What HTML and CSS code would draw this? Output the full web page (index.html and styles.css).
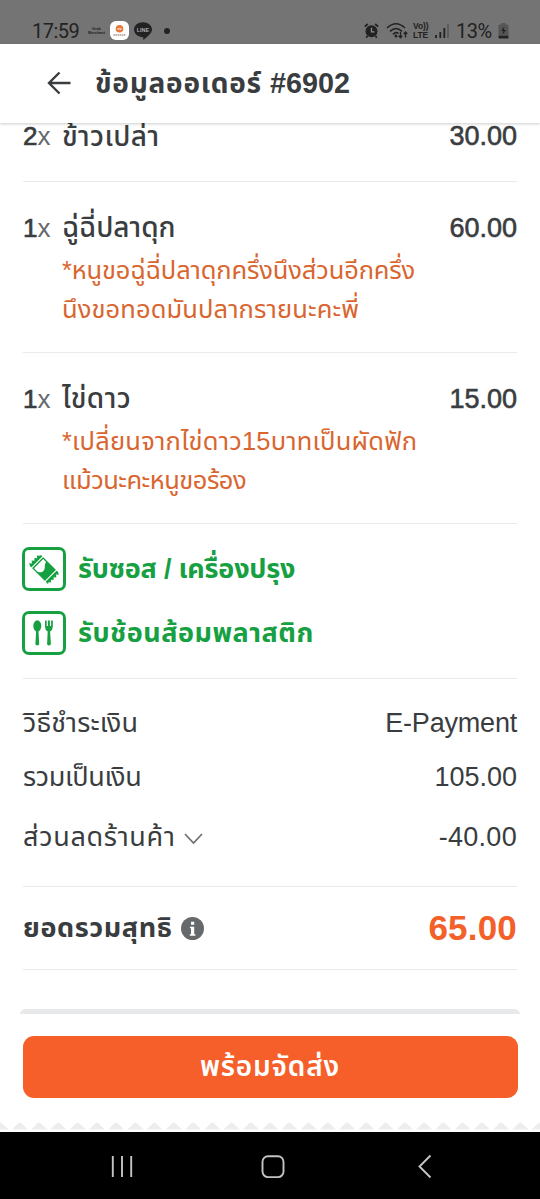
FILE: index.html
```html
<!DOCTYPE html>
<html lang="th">
<head>
<meta charset="utf-8">
<title>ข้อมูลออเดอร์ #6902</title>
<link rel="stylesheet" href="styles.css">
</head>
<body>
<div class="screen">
  <div class="status">
    <span class="clock">17:59</span>
    <span class="grab">Grab<br>Merchant</span>
    <span class="app"><svg width="19" height="19" viewBox="0 0 19 19"><circle cx="9.500" cy="7.800" r="3.800" fill="#e8773a"/><path d="M7.600 7l.8 1.900 1.100-1.900 1.100 1.900.8-1.900" fill="none" stroke="#fff" stroke-width=".7"/><path d="M3.300 14h12.500" stroke="#8b6a5a" stroke-width="1.200" stroke-dasharray="1.600 .5"/></svg></span>
    <span class="line"><svg width="18" height="18" viewBox="0 0 18 18"><path d="M9 .3c5 0 9 3.200 9 7.300 0 3.500-4.500 7.200-8 9.800-.8.500-.9.200-.8-.5l.1-1.700C4 15 0 12 0 7.600 0 3.500 4 .3 9 .3z" fill="#222"/></svg><b>LINE</b></span>
    <span class="dot"></span>
    <span class="tray">
      <svg class="alarm" width="15" height="16" viewBox="0 0 15 16"><circle cx="7.500" cy="8.300" r="6" fill="#222"/><path d="M.8 3.700L3.800 1M14.200 3.700L11.200 1M3.500 13l-1.300 1.700M11.500 13l1.300 1.700" stroke="#222" stroke-width="1.800"/><path d="M7.500 4.800v4h3" fill="none" stroke="#8a8a8a" stroke-width="1.300"/></svg>
      <svg class="wifi" width="23" height="17" viewBox="0 0 23 17"><path d="M1 6Q10 -2.500 19 6M4 9.300Q10 3.700 16 9.300M7 12.300Q10 9.500 12.500 11.500" fill="none" stroke="#222" stroke-width="1.600"/><circle cx="10" cy="14" r="1.500" fill="#222"/><path d="M14.500 10v5.500M12.700 13.700l1.800 2 1.800-2M19.500 15.500V10M17.700 12l1.800-2 1.800 2" fill="none" stroke="#222" stroke-width="1.300"/></svg>
      <span class="volte">Vo))<br>LTE</span>
      <svg class="bars" width="14" height="15" viewBox="0 0 14 15"><path d="M1 15v-3M5.300 15V9M9.300 15V5" stroke="#222" stroke-width="1.800"/><path d="M13 15V1" stroke="#5a5a5a" stroke-width="1.800"/></svg>
      <span class="pct">13%</span>
      <svg class="batt" width="11" height="16" viewBox="0 0 11 16"><path d="M3.500 0h4v1.500h2q1 0 1 1V12H.5V2.500q0-1 1-1h2z" fill="#555"/><path d="M.5 12.500h10v2q0 1-1 1h-8q-1 0-1-1z" fill="#222"/><path d="M6.300 3.500L3.200 8h2l-.6 3.500L8 7H5.800z" fill="#222"/></svg>
    </span>
  </div>
  <header class="header">
    <svg class="back" width="24" height="24" viewBox="0 0 24 24"><path d="M23.500 12H2.500M12.500 1.500L2 12l10.500 10.500" fill="none" stroke="#3a3d40" stroke-width="2.400"/></svg>
    <h1><span class="title-th">ข้อมูลออเดอร์</span> #6902</h1>
  </header>
  <main class="content">
    <section class="item first"><div class="row"><span class="qty">2<i>x</i></span><span class="name wide">ข้าวเปล่า</span><span class="price">30.00</span></div></section>
    <section class="item"><div class="row"><span class="qty">1<i>x</i></span><span class="name">ฉู่ฉี่ปลาดุก</span><span class="price">60.00</span></div>
      <p class="note"><span class="n1">*หนูขอฉู่ฉี่ปลาดุกครึ่งนึงส่วนอีกครึ่ง</span><br><span class="n2">นึงขอทอดมันปลากรายนะคะพี่</span></p></section>
    <section class="item"><div class="row"><span class="qty">1<i>x</i></span><span class="name wide">ไข่ดาว</span><span class="price">15.00</span></div>
      <p class="note"><span class="n3">*เปลี่ยนจากไข่ดาว15บาทเป็นผัดฟัก</span><br><span class="n4">แม้วนะคะหนูขอร้อง</span></p></section>
    <section class="extras">
      <div class="extra">
        <svg width="44" height="44" viewBox="0 0 44 44"><rect x="1.500" y="1.500" width="41" height="41" rx="5.500" fill="none" stroke="#16a042" stroke-width="3"/>
          <g transform="translate(22 22) rotate(45) scale(.86 .92) translate(-22 -22)"><path d="M8 13.500H36L39 15l-2.500 2 2.500 2-2.500 2 2.500 2-2.500 2 2.500 2-2.500 2 1.500 1.500H8L5 29l2.500-2L5 25l2.500-2L5 21l2.500-2L5 17l2.500-2z" fill="#16a042"/><path d="M10.800 13v18M33.200 13v18" stroke="#fff" stroke-width="1.300"/><path d="M13.200 15h5c-1 3 5 5 5 9 0 3-3 5-6 5h-4z" fill="#fff"/></g></svg>
        <span class="e1">รับซอส / เครื่องปรุง</span></div>
      <div class="extra">
        <svg width="44" height="44" viewBox="0 0 44 44"><rect x="1.500" y="1.500" width="41" height="41" rx="5.500" fill="none" stroke="#16a042" stroke-width="3"/>
          <g fill="#16a042"><ellipse cx="15.300" cy="15" rx="4" ry="5.800"/><path d="M14.200 19h2.200l.8 14q0 1.400-1.900 1.400T13.400 33z"/><path d="M23 9.500h1.700V15h1.200V9.500h2V15h1.200V9.500h1.700v6q0 3.500-2.700 5L28.900 33q0 1.400-1.900 1.400T25.100 33l.6-12.500q-2.700-1.500-2.700-5z"/></g></svg>
        <span class="e2">รับช้อนส้อมพลาสติก</span></div>
    </section>
    <section class="sums">
      <div class="sum"><span class="s1">วิธีชำระเงิน</span><span class="pay">E-Payment</span></div>
      <div class="sum second"><span class="s2">รวมเป็นเงิน</span><span>105.00</span></div>
      <div class="sum third"><span class="s3">ส่วนลดร้านค้า</span><svg width="19" height="12" viewBox="0 0 19 12"><path d="M1 1l8.500 9L18 1" fill="none" stroke="#6b6f72" stroke-width="1.700"/></svg><span class="less">-40.00</span></div>
    </section>
    <section class="total"><span class="label">ยอดรวมสุทธิ</span><svg width="23" height="23" viewBox="0 0 23 23"><circle cx="11.500" cy="11.500" r="11.500" fill="#66696c"/><path d="M10 4.800h3.200v3H10zM9 9.700h4.200v7.500h1.200v1.600H8.800v-1.600H10v-6H9z" fill="#fff"/></svg><span class="amount">65.00</span></section>
    <div class="band"></div>
    <button class="cta">พร้อมจัดส่ง</button>
    <svg class="zigzag" width="540" height="9" viewBox="0 0 540 9"><defs><pattern id="teeth" x="10.300" width="19.250" height="9" patternUnits="userSpaceOnUse"><path d="M1.500 7.500L8.500 .8q1-.8 2 0l7.300 6.700z" fill="#eceeee"/></pattern></defs><rect width="540" height="9" fill="url(#teeth)"/></svg>
  </main>
  <nav class="nav">
    <svg width="540" height="68" viewBox="0 0 540 68" fill="none" stroke="#c4c4c4" stroke-width="1.900"><path d="M112.800 24v21M122 24v21M131.200 24v21"/><rect x="262.500" y="24.300" width="21" height="20.800" rx="5.500"/><path d="M430.500 23.500L419.500 34.500l11 11"/></svg>
  </nav>
</div>
</body>
</html>
```
FILE: styles.css
```css
*{box-sizing:border-box}
body{margin:0;background:#fff;color:#3a3d40;font:27px/40px "Liberation Sans","Noto Sans Thai",sans-serif}
svg{display:block;flex:none}
.screen{width:540px;height:1199px;display:flex;flex-direction:column}

.status{height:44px;flex:none;background:#747474;color:#222;display:flex;align-items:center;padding:17px 31px 0 32px;font:400 20px/20px Roboto,sans-serif}
.clock{width:56px;letter-spacing:-.5px}
.grab{width:22px;font:700 3.800px/4px "Liberation Sans",sans-serif;text-align:center;padding-right:5px}
.app{width:19px;height:19px;border-radius:6px;background:#fff;margin-right:5px}
.line{position:relative;width:18px;height:18px}
.line b{position:absolute;left:0;top:4px;width:18px;text-align:center;font:700 5.500px/8px "Liberation Sans",sans-serif;color:#aaa}
.dot{width:6px;height:6px;border-radius:50%;background:#222;margin-left:12px}
.tray{margin-left:auto;display:flex;align-items:center}
.wifi{margin-left:7px}
.volte{margin-left:4px;width:22px;font:700 8.500px/8.500px "Liberation Sans",sans-serif;letter-spacing:-.1px;white-space:nowrap}
.pct{margin-left:7px;width:42px;letter-spacing:-.5px}

.header{position:relative;z-index:1;height:79px;flex:none;display:flex;align-items:center;padding:0 0 1px 47px;gap:24px;background:#fff;box-shadow:0 1px 3px rgba(0,0,0,.2)}
h1{margin:0;font-size:28.800px;line-height:40px;white-space:nowrap}
.title-th{font-size:28px;letter-spacing:.75px}

.content{height:1008px;flex:none;margin-top:1px;padding:0 23px;display:flex;flex-direction:column}
.item{flex:none;height:171px;padding-top:26px;border-bottom:1px solid #ebebeb}
.item.first{height:58px;padding:0}
.row{display:flex;height:40px}
.first .row{height:25px;line-height:25px}
.qty{width:39px;font-size:26px;-webkit-text-stroke:.7px}
.qty i{font-style:normal;color:#66696c;-webkit-text-stroke:0}
.name{font-size:28px;font-weight:500}
.wide{letter-spacing:.4px}
.price{margin-left:auto;-webkit-text-stroke:.6px}
.note{margin:3px 0 0 39px;font-size:26px;line-height:39px;color:#d9652f;white-space:nowrap}
.n1,.n2,.n3,.n4{font-size:25.500px}
.n1{letter-spacing:-.15px}
.n2{letter-spacing:.1px}
.n3{letter-spacing:.2px}
.n4{letter-spacing:-.5px}

.extras{flex:none;height:155px;padding-top:23px;display:flex;flex-direction:column;gap:20px;border-bottom:1px solid #ebebeb;color:#16a042;font-weight:700}
.extra{display:flex;align-items:center;gap:12px;height:44px;margin-left:-1px}
.e1{letter-spacing:-.2px}
.e2{letter-spacing:.5px}

.sums{flex:none;height:208px;padding-top:24px;border-bottom:1px solid #ebebeb}
.sum{display:flex;align-items:center;justify-content:space-between;height:40px}
.second{margin-top:14px}
.third{margin-top:20px}
.third svg{margin:4px 0 0 8px}
.s1{letter-spacing:.15px}
.pay{letter-spacing:-.2px}
.s2{letter-spacing:-.35px}
.s3{letter-spacing:.7px}
.less{margin-left:auto;letter-spacing:.3px}

.total{flex:none;height:83px;display:flex;align-items:center;border-bottom:1px solid #ebebeb;font-weight:700}
.label{letter-spacing:.6px}
.total svg{margin-left:9px}
.amount{margin-left:auto;font-size:35px;letter-spacing:.2px;color:#f4602a}
.band{flex:none;height:5px;margin:39px -3px 0;background:#e8e9eb;border-radius:6px 6px 0 0 / 5px 5px 0 0}
.cta{flex:none;height:62px;margin:22px -.5px 0;padding:0;border:0;border-radius:11px;background:#f65f2a;color:#fff;font:600 28px/62px "Liberation Sans","Noto Sans Thai",sans-serif;letter-spacing:.8px}
.zigzag{margin:24px -23px 0}
.nav{height:67px;flex:none;overflow:hidden;background:#000}
```
